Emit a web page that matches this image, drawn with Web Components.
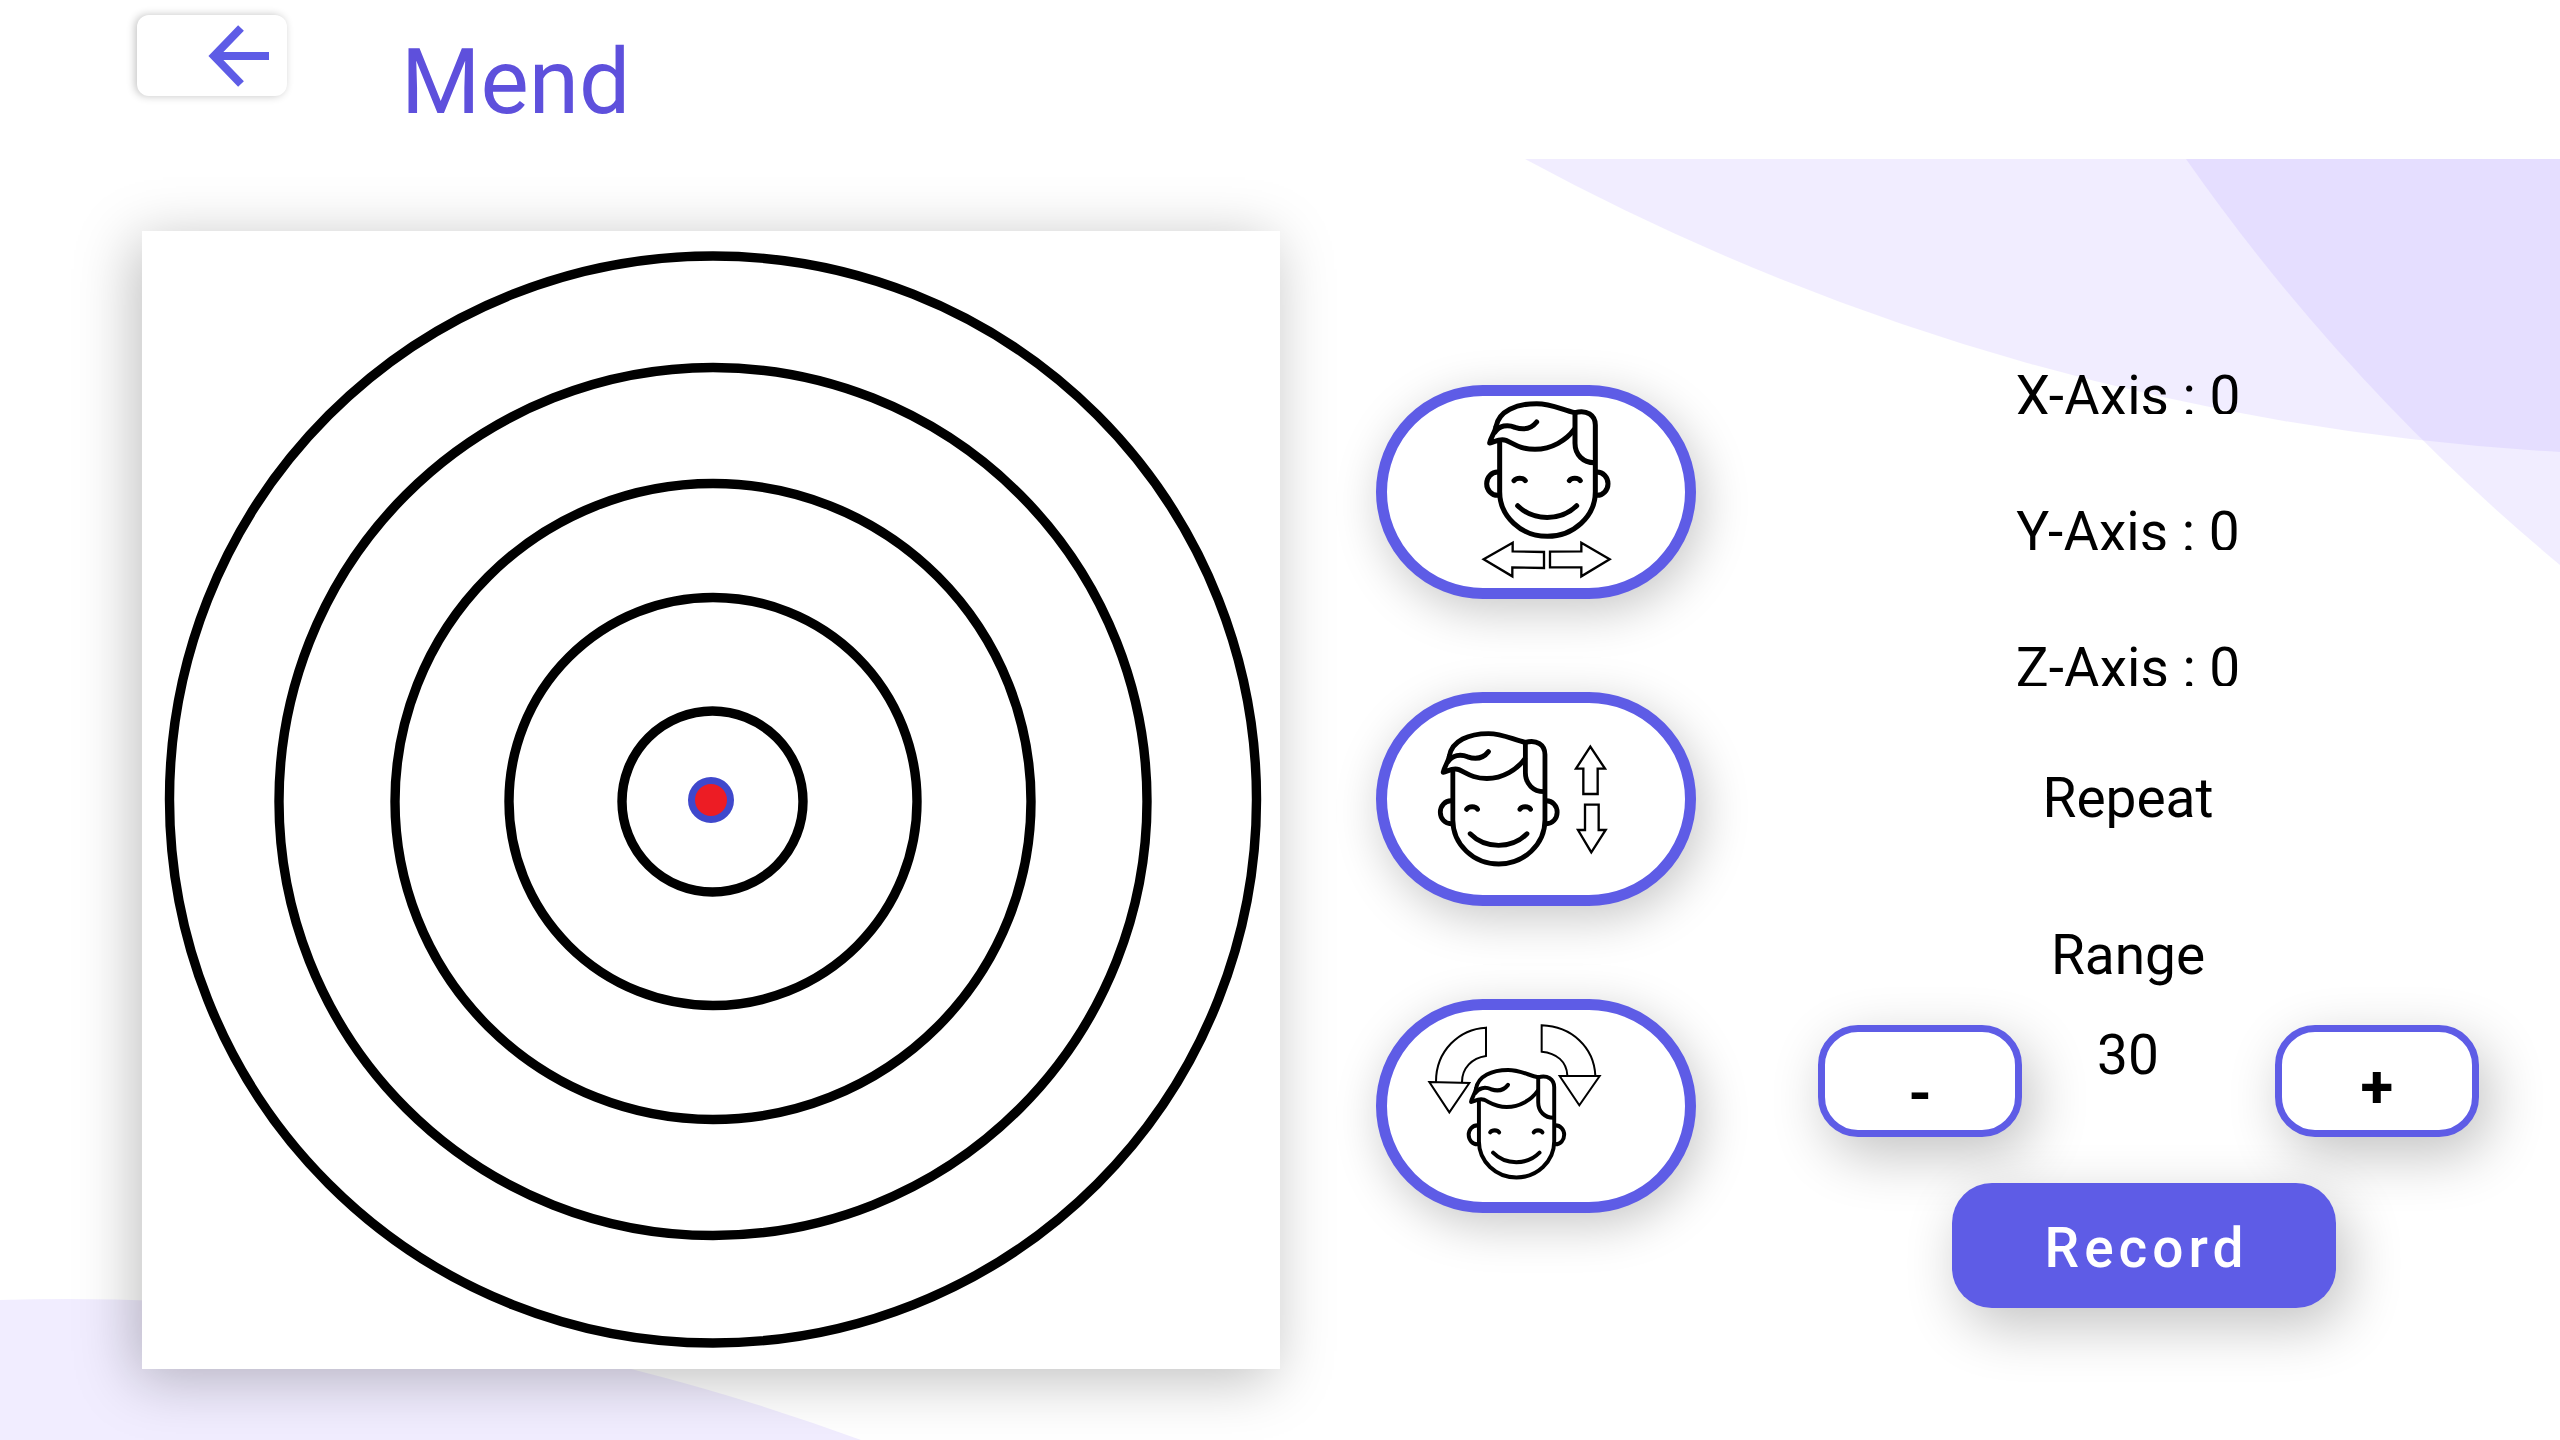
<!DOCTYPE html>
<html lang="en">
<head>
<meta charset="utf-8">
<title>Mend</title>
<style>
  html, body { margin: 0; min-height: 100%; background: #fff; }
  body { font-family: Roboto, "Liberation Sans", sans-serif; color: #000; }
</style>
</head>
<body>
<mend-app></mend-app>
<script>
const FACE = `
  <g fill="none" stroke="#000" stroke-width="15" stroke-linecap="round" stroke-linejoin="round">
    <path d="M408 200C416 152 470 131 530 131C575 131 605 149 645 158"/>
    <path d="M408 200C404 220 392 232 389 249C402 247 418 234 438 241C462 251 480 268 525 268C575 268 620 240 643 208"/>
    <path d="M405 216C418 197 442 192 465 202C492 211 514 206 530 186"/>
    <path d="M645 158V250C645 285 670 308 703 308"/>
    <path d="M645 158C680 148 706 165 706 195V395C706 470 640 529 562 529C484 529 419 470 419 395V245"/>
    <path d="M413 336A33 35 0 0 0 413 406M711 336A33 35 0 0 1 711 406"/>
    <path d="M462 362C469 352 490 352 496 362M628 362C634 352 655 352 661 362"/>
    <path d="M473 437C520 484 603 484 650 437"/>
  </g>`;

const MOTIONS = {
  turn: { label: 'Turn head left and right', box: '81 108 894 576', art: `${FACE}
    <path fill="none" stroke="#000" stroke-width="7" d="M371 598L458 548V574L552 576V624L457 622V649ZM749 598L664 548V574L570 575V622H664V649Z"/>` },
  nod: { label: 'Nod head up and down', box: '81 99 894 576', art: `
    <g transform="translate(-125 62) scale(.963 .983)">${FACE}</g>
    <path fill="none" stroke="#000" stroke-width="7" d="M691 230L648 296H670V372H713V296H735ZM694 547L654 480H675V404H716V480H737Z"/>` },
  tilt: { label: 'Tilt head sideways', box: '81 93 894 576', art: `
    <g transform="translate(27 167) scale(.787 .81)">${FACE}</g>
    <path fill="none" stroke="#000" stroke-width="6" d="M228 308C228 215 298 150 378 146V231C335 237 306 268 306 309M208 309L328 312L268 400ZM706 290C702 205 635 142 545 139V218C590 222 620 248 622 289M599 291H719L658 379Z"/>` }
};

function define(name, html, setup) {
  const template = document.createElement('template');
  template.innerHTML = html;
  customElements.define(name, class extends HTMLElement {
    connectedCallback() {
      if (this.shadowRoot) return;
      this.attachShadow({ mode: 'open' }).append(template.content.cloneNode(true));
      if (setup) setup(this, this.shadowRoot);
    }
  });
}

define('back-button', `
  <style>
    :host { display: block; }
    button { display: flex; justify-content: flex-end; align-items: flex-start; width: 150px; height: 81px;
      box-sizing: border-box; padding: 10px 18px; border: 0; border-radius: 12px; background: #fff;
      box-shadow: -2px 0 9px rgba(0,0,0,.24); cursor: pointer; }
    svg { display: block; width: 62px; height: 62px; }
  </style>
  <button type="button" aria-label="Back">
    <svg viewBox="0 0 62 62" fill="none" stroke="#5e5ce6" stroke-width="8"><path d="M34 3L7 31L34 59M7 31H62"/></svg>
  </button>`);

define('page-header', `
  <style>
    :host { display: flex; align-items: flex-start; gap: 114px; height: 159px; box-sizing: border-box;
      padding: 15px 137px 0; }
    h1 { margin: 13px 0 0; font-size: 91px; line-height: 108px; font-weight: 400; color: #5e50dc; }
  </style>
  <back-button></back-button>
  <h1><slot></slot></h1>`);

define('page-backdrop', `
  <style>
    :host { display: block; overflow: hidden; }
    svg { display: block; width: 100%; height: 100%; }
  </style>
  <svg viewBox="0 0 2560 1281" preserveAspectRatio="none" aria-hidden="true">
    <g fill="#ad95ff" fill-opacity=".17">
      <path d="M1525 0A2460 2460 0 0 0 2560 293V0Z"/>
      <path d="M2186 0A2080 2080 0 0 0 2560 406V0Z"/>
      <path d="M0 1141A2300 2300 0 0 1 861 1281H0Z"/>
    </g>
  </svg>`);

define('target-board', `
  <style>
    :host { display: block; background: #fff; box-shadow: -7px 10px 56px rgba(0,0,0,.26); }
    svg { display: block; width: 100%; }
  </style>
  <svg viewBox="0 0 1138 1138" role="img" aria-label="Target">
    <g fill="none" stroke="#000" stroke-width="9.4">
      <circle cx="570.5" cy="570.5" r="90.5"/><circle cx="571" cy="570.5" r="204"/>
      <circle cx="571" cy="570.5" r="318"/><circle cx="571" cy="570.5" r="434"/>
      <circle cx="571" cy="568.5" r="543.5"/>
    </g>
    <circle cx="569" cy="569" r="19.5" fill="#ed1c24" stroke="#3f48cc" stroke-width="7"/>
  </svg>`);

define('motion-button', `
  <style>
    :host { display: block; }
    button { display: block; width: 320px; height: 214px; box-sizing: border-box; padding: 0;
      border: 11px solid #5e5ce6; border-radius: 107px; background: #fff;
      box-shadow: 6px 12px 48px rgba(0,0,0,.22); cursor: pointer; }
    svg { display: block; width: 298px; height: 192px; }
  </style>
  <button type="button"><svg aria-hidden="true"></svg></button>`,
  (host, root) => {
    const motion = MOTIONS[host.getAttribute('motion')];
    root.querySelector('button').setAttribute('aria-label', motion.label);
    const svg = root.querySelector('svg');
    svg.setAttribute('viewBox', motion.box);
    svg.innerHTML = motion.art;
  });

define('axis-reading', `
  <style>
    :host { display: block; height: 45px; overflow: hidden; font-size: 55px; line-height: 54px; white-space: nowrap; }
  </style>
  <slot></slot>`);

define('step-button', `
  <style>
    :host { display: block; }
    button { display: block; width: 204px; height: 112px; box-sizing: border-box; padding: 12px 0 0;
      border: 7px solid #5e5ce6; border-radius: 40px; background: #fff; color: #000;
      font: 700 60px/64px Roboto, sans-serif; box-shadow: 10px 18px 56px rgba(0,0,0,.24); cursor: pointer; }
    :host([low]) button { padding-top: 26px; }
  </style>
  <button type="button"><slot></slot></button>`);

define('range-stepper', `
  <style>
    :host { display: grid; grid-template-columns: 1fr auto 1fr; align-items: start; width: 100%; }
    .down { justify-self: end; margin-right: 75px; }
    .up { justify-self: start; margin-left: 116px; }
    output { font-size: 55px; line-height: 60px; }
  </style>
  <step-button class="down" low>-</step-button>
  <output><slot></slot></output>
  <step-button class="up">+</step-button>`);

define('record-button', `
  <style>
    :host { display: block; }
    button { display: block; width: 384px; height: 125px; padding: 4px 0 0 5px; border: 0; border-radius: 40px;
      background: #5e5ce6; color: #fff; font: 500 55px/64px Roboto, sans-serif; letter-spacing: 5px;
      box-shadow: 10px 18px 56px rgba(0,0,0,.24); cursor: pointer; }
  </style>
  <button type="button"><slot></slot></button>`);

define('control-panel', `
  <style>
    :host { display: flex; flex-direction: column; align-items: center; }
    .axes { display: flex; flex-direction: column; align-items: center; gap: 91px; }
    p { margin: 0; font-size: 55px; line-height: 64px; }
    .repeat { margin-top: 80px; }
    .range { margin-top: 93px; }
    range-stepper { margin-top: 38px; }
    record-button { margin: 46px 0 0 32px; }
  </style>
  <div class="axes">
    <axis-reading>X-Axis : 0</axis-reading>
    <axis-reading>Y-Axis : 0</axis-reading>
    <axis-reading>Z-Axis : 0</axis-reading>
  </div>
  <p class="repeat">Repeat</p>
  <p class="range">Range</p>
  <range-stepper>30</range-stepper>
  <record-button>Record</record-button>`);

define('mend-app', `
  <style>
    :host { display: flex; flex-direction: column; min-height: 100vh; }
    main { flex: 1; display: grid; overflow: hidden; }
    page-backdrop, .content { grid-area: 1 / 1; min-width: 0; min-height: 0; }
    page-backdrop { contain: size; }
    .content { display: grid; grid-template-columns: minmax(0, 1138fr) 96px 320px minmax(664px, 864fr);
      align-items: start; padding: 72px 0 71px 142px; }
    .motions { grid-column: 3; display: flex; flex-direction: column; gap: 93px; padding-top: 154px; }
    control-panel { padding-top: 138px; }
  </style>
  <page-header>Mend</page-header>
  <main>
    <page-backdrop></page-backdrop>
    <div class="content">
      <target-board></target-board>
      <div class="motions">
        <motion-button motion="turn"></motion-button>
        <motion-button motion="nod"></motion-button>
        <motion-button motion="tilt"></motion-button>
      </div>
      <control-panel></control-panel>
    </div>
  </main>`);
</script>
</body>
</html>
